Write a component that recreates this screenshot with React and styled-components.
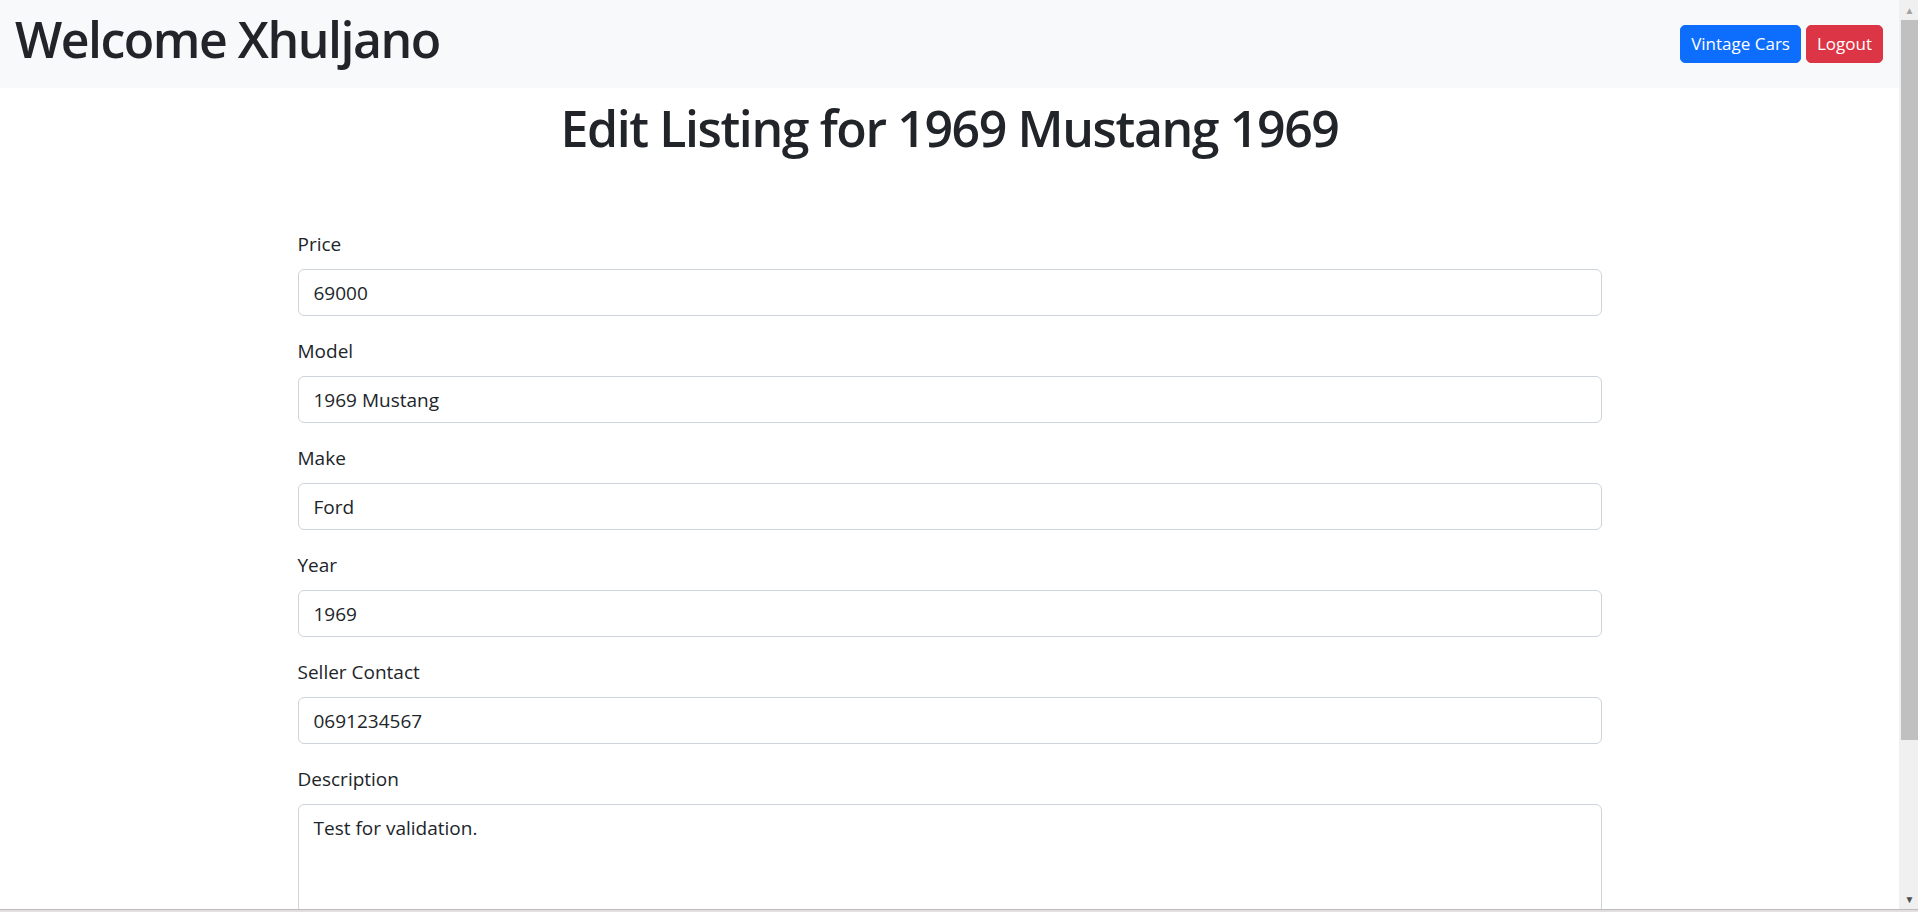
import React from "react";
import styled, { createGlobalStyle } from "styled-components";

const GlobalStyle = createGlobalStyle`
  body {
    margin: 0;
    font-family: "Open Sans", "Noto Sans", "Liberation Sans", sans-serif;
    color: #212529;
    background: #fff;
  }
  *, *::before, *::after { box-sizing: border-box; }
`;

const Page = styled.div`
  padding-right: 19px;
`;

const Navbar = styled.nav`
  display: flex;
  align-items: center;
  justify-content: space-between;
  height: 88px;
  padding: 0 16px 0 15px;
  background: #f8f9fa;
`;

const Welcome = styled.h1`
  margin: 0 0 11px;
  font-size: 50px;
  font-weight: 600;
  line-height: 60px;
  letter-spacing: -1.5px;
`;

const Actions = styled.div`
  display: flex;
  gap: 5px;
`;

const NavButton = styled.button`
  height: 38px;
  padding: 0 10px;
  border: 1px solid ${(p) => p.$bg};
  border-radius: 5px;
  background: ${(p) => p.$bg};
  color: #fff;
  font-family: inherit;
  font-size: 17px;
  line-height: 26px;
  cursor: pointer;
`;

const Title = styled.h1`
  margin: 10px 0 0;
  text-align: center;
  font-size: 50px;
  font-weight: 600;
  line-height: 60px;
  letter-spacing: -1.4px;
`;

const Form = styled.form`
  width: 1304px;
  margin: 71px auto 0;
  padding-bottom: 120px;
`;

const Group = styled.div`
  margin-bottom: 20px;
`;

const Label = styled.label`
  display: block;
  margin-bottom: 10px;
  font-size: 19px;
  line-height: 30px;
`;

const fieldBase = `
  display: block;
  width: 100%;
  padding: 7.5px 15px;
  border: 1px solid #ced4da;
  border-radius: 6px;
  background: #fff;
  color: #212529;
  font-family: inherit;
  font-size: 19px;
  line-height: 30px;
  outline: none;
`;

const Input = styled.input`
  ${fieldBase}
  height: 47px;
`;

const TextArea = styled.textarea`
  ${fieldBase}
  height: 168px;
  resize: vertical;
`;

/* Drawn window scrollbar (headless browser hides the real one) */
const ScrollTrack = styled.div`
  position: fixed;
  top: 0;
  right: 0;
  bottom: 3px;
  width: 19px;
  display: flex;
  flex-direction: column;
  background: #f0f0f0;
`;

const ScrollArrow = styled.div`
  height: 20px;
  display: flex;
  align-items: center;
  justify-content: center;
  padding-left: 2px;
  color: ${(p) => p.$color};
  font-size: 10px;
  line-height: 1;
`;

const ScrollGap = styled.div`
  flex: 1;
  padding-left: 2px;
`;

const ScrollThumb = styled.div`
  height: 720px;
  background: #c0c0c0;
`;

const BottomEdge = styled.div`
  position: fixed;
  left: 0;
  right: 0;
  bottom: 0;
  height: 3px;
  border-top: 1px solid #bcbcbc;
  background: #e4dfdf;
`;

const fields = [
  { label: "Price", value: "69000" },
  { label: "Model", value: "1969 Mustang" },
  { label: "Make", value: "Ford" },
  { label: "Year", value: "1969" },
  { label: "Seller Contact", value: "0691234567" },
];

export default function App() {
  return (
    <>
      <GlobalStyle />
      <Page>
        <Navbar>
          <Welcome>Welcome Xhuljano</Welcome>
          <Actions>
            <NavButton $bg="#0d6efd">Vintage Cars</NavButton>
            <NavButton $bg="#dc3545">Logout</NavButton>
          </Actions>
        </Navbar>
        <Title>Edit Listing for 1969 Mustang 1969</Title>
        <Form onSubmit={(e) => e.preventDefault()}>
          {fields.map((f) => (
            <Group key={f.label}>
              <Label>{f.label}</Label>
              <Input type="text" defaultValue={f.value} />
            </Group>
          ))}
          <Group>
            <Label>Description</Label>
            <TextArea defaultValue="Test for validation." />
          </Group>
        </Form>
      </Page>
      <ScrollTrack aria-hidden="true">
        <ScrollArrow $color="#a3a3a3">▲</ScrollArrow>
        <ScrollGap>
          <ScrollThumb />
        </ScrollGap>
        <ScrollArrow $color="#505050">▼</ScrollArrow>
      </ScrollTrack>
      <BottomEdge />
    </>
  );
}
